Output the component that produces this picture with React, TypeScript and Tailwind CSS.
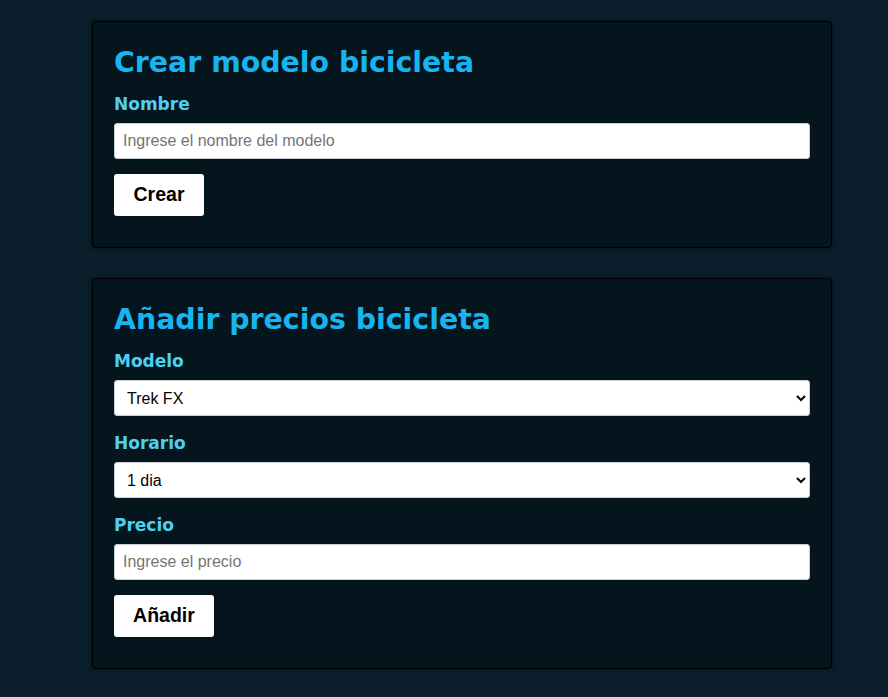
export default function App() {
  return (
    <div className="min-h-[697px] bg-[#0a1f2b] pt-[21px] pb-6" style={{ fontFamily: '"Liberation Sans", Arial, sans-serif' }}>
      <div className="ml-[92px] w-[740px] flex flex-col gap-[30px]">
        {/* crear modelo */}
        <section className="rounded bg-[#05151e] border border-black px-[21px] pt-[21px] pb-[31px] shadow-[0_0_4px_rgba(0,0,0,0.6)]">
          <h2 className="text-[28.4px] leading-[40px] font-bold text-[#18b4f0] mb-[9px]" style={{ fontFamily: '"DejaVu Sans", Verdana, sans-serif' }}>
            Crear modelo bicicleta
          </h2>
          <label className="block text-[17px] leading-[24px] font-bold text-[#4dd0f0] mb-[7px]" style={{ fontFamily: '"DejaVu Sans", Verdana, sans-serif' }}>
            Nombre
          </label>
          <input
            className="block w-full h-[36px] rounded-[3px] bg-white border border-[#c8ced4] px-[8px] text-[16px] text-black placeholder:text-[#757575] outline-none"
            placeholder="Ingrese el nombre del modelo"
          />
          <button className="mt-[15px] h-[42px] w-[90px] rounded-[3px] bg-white text-[19.5px] font-bold text-black">Crear</button>
        </section>

        {/* añadir precios */}
        <section className="rounded bg-[#05151e] border border-black px-[21px] pt-[21px] pb-[31px] shadow-[0_0_4px_rgba(0,0,0,0.6)]">
          <h2 className="text-[28.4px] leading-[40px] font-bold text-[#18b4f0] mb-[9px]" style={{ fontFamily: '"DejaVu Sans", Verdana, sans-serif' }}>
            Añadir precios bicicleta
          </h2>
          <label className="block text-[17px] leading-[24px] font-bold text-[#4dd0f0] mb-[7px]" style={{ fontFamily: '"DejaVu Sans", Verdana, sans-serif' }}>
            Modelo
          </label>
          <select className="block w-full h-[36px] rounded-[3px] bg-white border border-[#c8ced4] pl-[8px] pr-[4px] text-[16px] text-black outline-none" defaultValue="trek">
            <option value="trek">Trek FX</option>
          </select>
          <label className="block mt-[15px] text-[17px] leading-[24px] font-bold text-[#4dd0f0] mb-[7px]" style={{ fontFamily: '"DejaVu Sans", Verdana, sans-serif' }}>
            Horario
          </label>
          <select className="block w-full h-[36px] rounded-[3px] bg-white border border-[#c8ced4] pl-[8px] pr-[4px] text-[16px] text-black outline-none" defaultValue="1">
            <option value="1">1 dia</option>
          </select>
          <label className="block mt-[15px] text-[17px] leading-[24px] font-bold text-[#4dd0f0] mb-[7px]" style={{ fontFamily: '"DejaVu Sans", Verdana, sans-serif' }}>
            Precio
          </label>
          <input
            className="block w-full h-[36px] rounded-[3px] bg-white border border-[#c8ced4] px-[8px] text-[16px] text-black placeholder:text-[#757575] outline-none"
            placeholder="Ingrese el precio"
          />
          <button className="mt-[15px] h-[42px] w-[100px] rounded-[3px] bg-white text-[19.5px] font-bold text-black">Añadir</button>
        </section>
      </div>
    </div>
  )
}
